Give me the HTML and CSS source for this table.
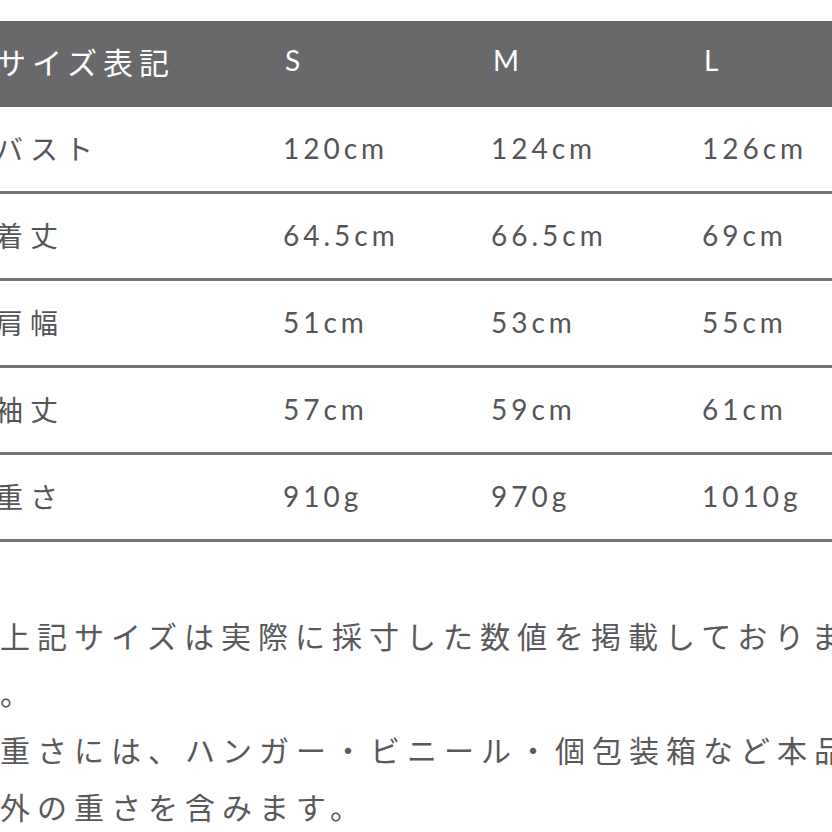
FILE: index.html
```html
<!DOCTYPE html>
<html lang="ja">
<head>
<meta charset="utf-8">
<title>サイズ表</title>
<link rel="stylesheet" href="styles.css">
</head>
<body>
<div class="page">
  <div class="table">
    <div class="row head">
      <div class="cell label">サイズ表記</div>
      <div class="cell num">S</div>
      <div class="cell num">M</div>
      <div class="cell num">L</div>
    </div>
    <div class="row">
      <div class="cell label">バスト</div>
      <div class="cell num">120cm</div>
      <div class="cell num">124cm</div>
      <div class="cell num">126cm</div>
    </div>
    <div class="row">
      <div class="cell label">着丈</div>
      <div class="cell num">64.5cm</div>
      <div class="cell num">66.5cm</div>
      <div class="cell num">69cm</div>
    </div>
    <div class="row">
      <div class="cell label">肩幅</div>
      <div class="cell num">51cm</div>
      <div class="cell num">53cm</div>
      <div class="cell num">55cm</div>
    </div>
    <div class="row">
      <div class="cell label">袖丈</div>
      <div class="cell num">57cm</div>
      <div class="cell num">59cm</div>
      <div class="cell num">61cm</div>
    </div>
    <div class="row">
      <div class="cell label">重さ</div>
      <div class="cell num">910g</div>
      <div class="cell num">970g</div>
      <div class="cell num">1010g</div>
    </div>
  </div>
  <div class="notes">
    <p>上記サイズは実際に採寸した数値を掲載しております<br>。</p>
    <p>重さには、ハンガー・ビニール・個包装箱など本品以<br>外の重さを含みます。</p>
  </div>
</div>
</body>
</html>
```

FILE: styles.css
```css
html, body {
  margin: 0;
  padding: 0;
  background: #ffffff;
}

.page {
  width: 832px;
  height: 832px;
  overflow: hidden;
  padding-top: 21px;
  box-sizing: border-box;
  font-family: "Lato", "Noto Sans CJK JP", sans-serif;
  color: #555557;
}

.row {
  display: grid;
  grid-template-columns: 283px 208px 211px 1fr;
  align-items: center;
  height: 87px;
  box-sizing: border-box;
  border-bottom: 3px solid #737373;
}

.row.head {
  height: 86px;
  background: #69696b;
  color: #ffffff;
  border-bottom: 0;
  padding-bottom: 6px;
}

.row.head .label {
  font-size: 30px;
  letter-spacing: 6px;
  margin-left: -4px;
}

.row.head .num {
  padding-left: 2px;
}

.cell {
  white-space: nowrap;
}

.label {
  margin-left: -5px;
  font-family: "Noto Sans CJK JP", sans-serif;
  font-size: 28px;
  letter-spacing: 7px;
  line-height: 1.2;
}

.num {
  font-size: 28px;
  letter-spacing: 4px;
  line-height: 1.2;
}

.notes {
  margin-top: 65px;
  font-family: "Noto Sans CJK JP", sans-serif;
  font-size: 30px;
  letter-spacing: 7px;
  line-height: 57px;
  color: #59595b;
}

.notes p {
  margin: 0;
  white-space: nowrap;
}
```
